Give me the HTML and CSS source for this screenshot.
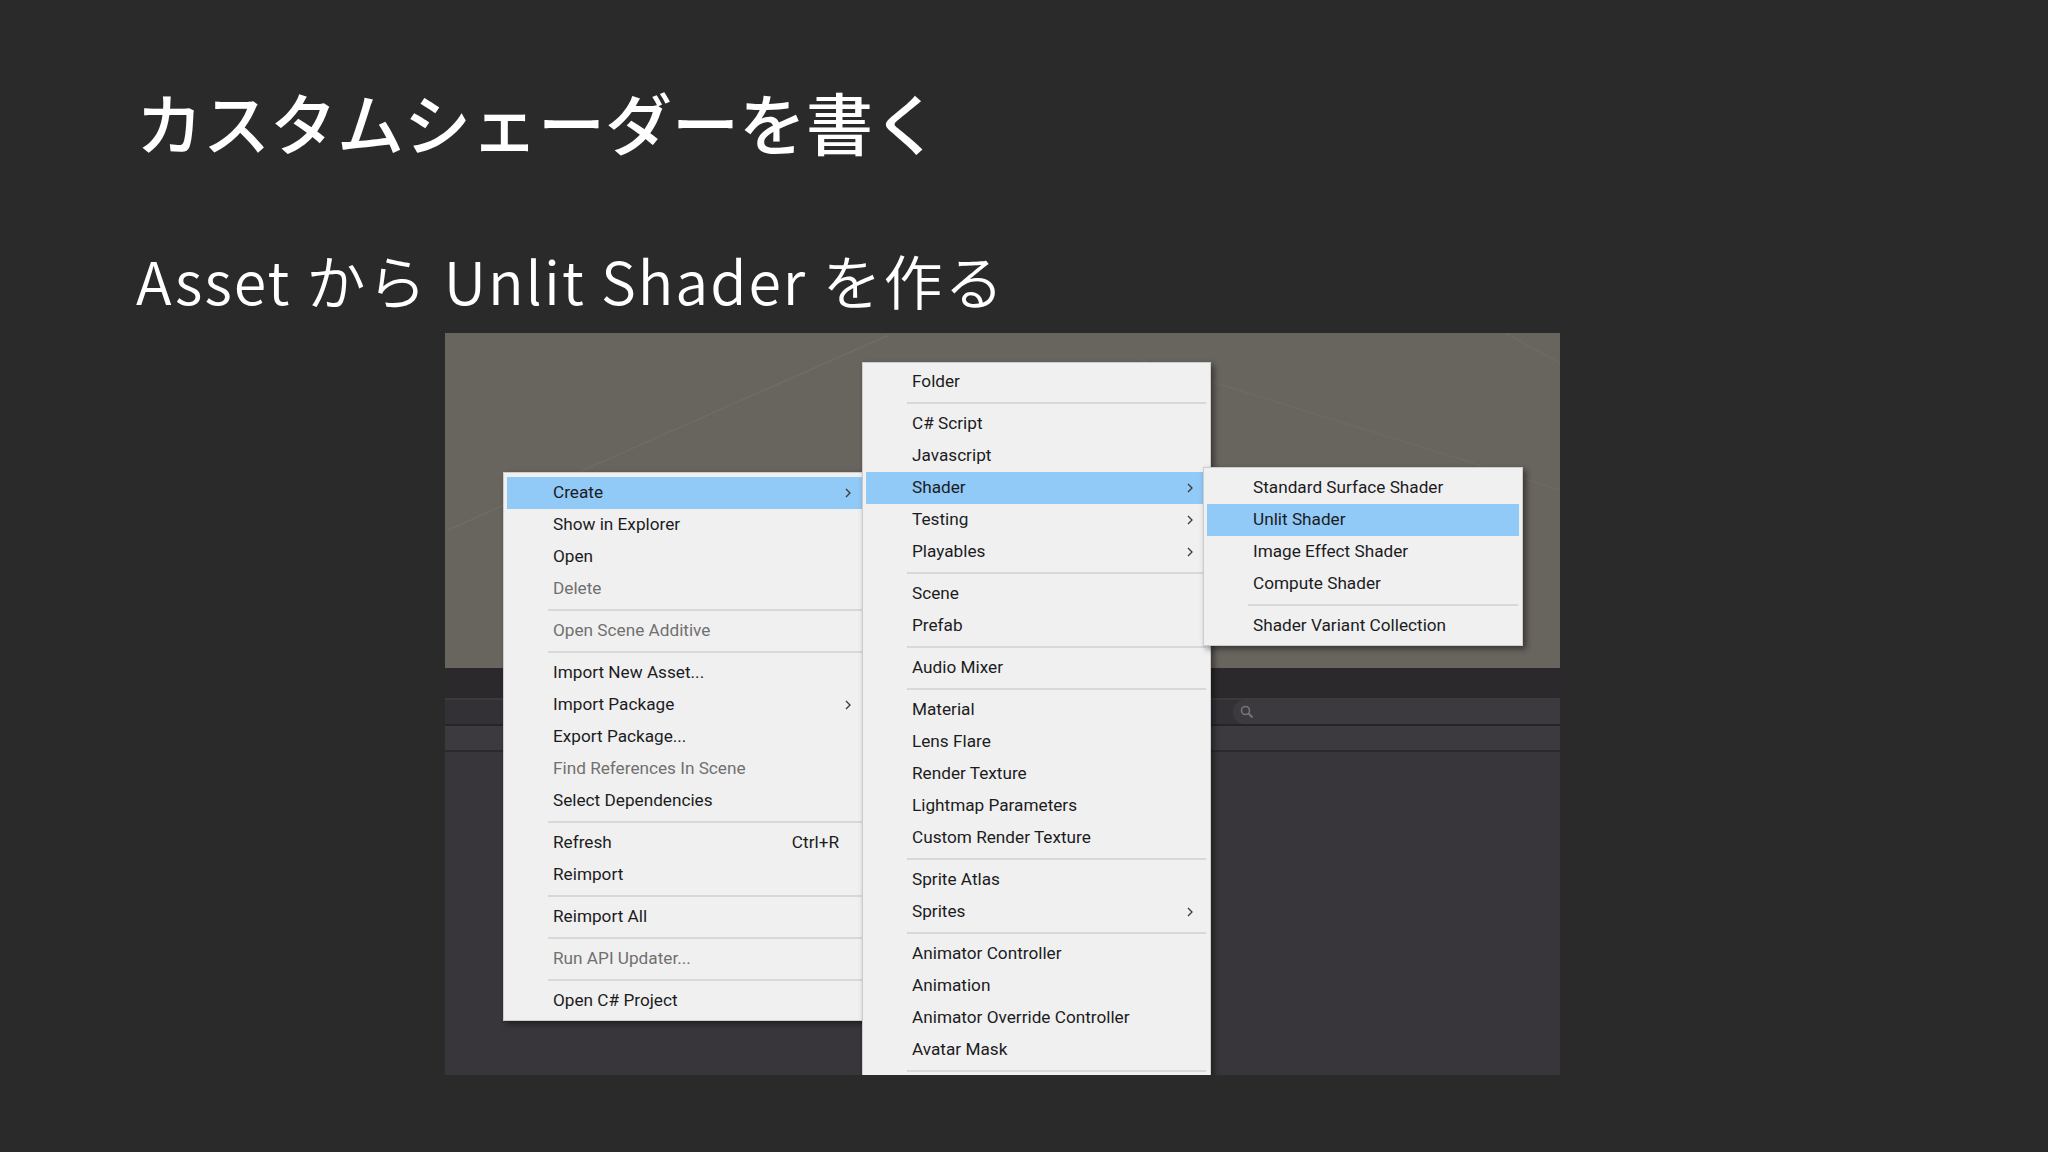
FILE: index.html
```html
<!DOCTYPE html>
<html lang="ja">
<head>
<meta charset="utf-8">
<title>カスタムシェーダーを書く</title>
<link rel="stylesheet" href="styles.css">
</head>
<body>
<div class="slide">
  <h1 class="title">カスタムシェーダーを書く</h1>
  <h2 class="subtitle">Asset から Unlit Shader を作る</h2>
  <div class="shot">
    <div class="scene">
      <svg class="grid" width="1115" height="335" viewBox="0 0 1115 335">
        <line x1="444" y1="2" x2="3" y2="197" stroke="rgba(255,255,255,0.05)" stroke-width="1.5"/>
        <line x1="690" y1="25" x2="1115" y2="157" stroke="rgba(255,255,255,0.035)" stroke-width="1.5"/>
        <line x1="1060" y1="0" x2="1115" y2="30" stroke="rgba(255,255,255,0.04)" stroke-width="1.5"/>
      </svg>
    </div>
    <div class="gap"></div>
    <div class="tb-line"></div>
    <div class="toolbar">
      <div class="search">
        <svg width="14" height="14" viewBox="0 0 14 14"><circle cx="5.5" cy="5.5" r="4" fill="none" stroke="#75737a" stroke-width="1.6"/><line x1="8.5" y1="8.5" x2="12.5" y2="12.5" stroke="#75737a" stroke-width="2"/></svg>
      </div>
    </div>
    <div class="dline"></div>
    <div class="row2"></div>
    <div class="dline2"></div>
    <div class="panel"></div>

    <div class="menu menu-left">
      <div class="item hl"><span>Create</span><svg class="arrow" width="6" height="10" viewBox="0 0 6 10"><path d="M1 1 L5 5 L1 9" fill="none" stroke="#3a3a3a" stroke-width="1.3"/></svg></div>
      <div class="item"><span>Show in Explorer</span></div>
      <div class="item"><span>Open</span></div>
      <div class="item dis"><span>Delete</span></div>
      <div class="sep"></div>
      <div class="item dis"><span>Open Scene Additive</span></div>
      <div class="sep"></div>
      <div class="item"><span>Import New Asset...</span></div>
      <div class="item"><span>Import Package</span><svg class="arrow" width="6" height="10" viewBox="0 0 6 10"><path d="M1 1 L5 5 L1 9" fill="none" stroke="#3a3a3a" stroke-width="1.3"/></svg></div>
      <div class="item"><span>Export Package...</span></div>
      <div class="item dis"><span>Find References In Scene</span></div>
      <div class="item"><span>Select Dependencies</span></div>
      <div class="sep"></div>
      <div class="item"><span>Refresh</span><span class="key">Ctrl+R</span></div>
      <div class="item"><span>Reimport</span></div>
      <div class="sep"></div>
      <div class="item"><span>Reimport All</span></div>
      <div class="sep"></div>
      <div class="item dis"><span>Run API Updater...</span></div>
      <div class="sep"></div>
      <div class="item"><span>Open C# Project</span></div>
    </div>

    <div class="menu menu-mid">
      <div class="item"><span>Folder</span></div>
      <div class="sep"></div>
      <div class="item"><span>C# Script</span></div>
      <div class="item"><span>Javascript</span></div>
      <div class="item hl"><span>Shader</span><svg class="arrow" width="6" height="10" viewBox="0 0 6 10"><path d="M1 1 L5 5 L1 9" fill="none" stroke="#3a3a3a" stroke-width="1.3"/></svg></div>
      <div class="item"><span>Testing</span><svg class="arrow" width="6" height="10" viewBox="0 0 6 10"><path d="M1 1 L5 5 L1 9" fill="none" stroke="#3a3a3a" stroke-width="1.3"/></svg></div>
      <div class="item"><span>Playables</span><svg class="arrow" width="6" height="10" viewBox="0 0 6 10"><path d="M1 1 L5 5 L1 9" fill="none" stroke="#3a3a3a" stroke-width="1.3"/></svg></div>
      <div class="sep"></div>
      <div class="item"><span>Scene</span></div>
      <div class="item"><span>Prefab</span></div>
      <div class="sep"></div>
      <div class="item"><span>Audio Mixer</span></div>
      <div class="sep"></div>
      <div class="item"><span>Material</span></div>
      <div class="item"><span>Lens Flare</span></div>
      <div class="item"><span>Render Texture</span></div>
      <div class="item"><span>Lightmap Parameters</span></div>
      <div class="item"><span>Custom Render Texture</span></div>
      <div class="sep"></div>
      <div class="item"><span>Sprite Atlas</span></div>
      <div class="item"><span>Sprites</span><svg class="arrow" width="6" height="10" viewBox="0 0 6 10"><path d="M1 1 L5 5 L1 9" fill="none" stroke="#3a3a3a" stroke-width="1.3"/></svg></div>
      <div class="sep"></div>
      <div class="item"><span>Animator Controller</span></div>
      <div class="item"><span>Animation</span></div>
      <div class="item"><span>Animator Override Controller</span></div>
      <div class="item"><span>Avatar Mask</span></div>
      <div class="sep"></div>
      <div class="spacer"></div>
    </div>

    <div class="menu menu-right">
      <div class="item"><span>Standard Surface Shader</span></div>
      <div class="item hl"><span>Unlit Shader</span></div>
      <div class="item"><span>Image Effect Shader</span></div>
      <div class="item"><span>Compute Shader</span></div>
      <div class="sep"></div>
      <div class="item"><span>Shader Variant Collection</span></div>
    </div>
  </div>
</div>
</body>
</html>
```

FILE: styles.css
```css
* { box-sizing: border-box; }
html, body {
  margin: 0;
  background: #2a2a2a;
}
body {
  width: 2048px;
  height: 1152px;
  overflow: hidden;
  font-family: "Noto Sans CJK JP", "Noto Sans", sans-serif;
}
.slide {
  padding: 87px 0 0 136px;
}
.title {
  margin: 0;
  font-size: 67px;
  line-height: 68px;
  font-weight: 500;
  color: #ffffff;
  white-space: nowrap;
}
.subtitle {
  margin: 96px 0 0;
  font-size: 59px;
  line-height: 57px;
  font-weight: 350;
  letter-spacing: 2px;
  color: #ffffff;
  white-space: nowrap;
}
.shot {
  margin: 25px 0 0 309px;
  width: 1115px;
  height: 742px;
  position: relative;
  overflow: hidden;
  background: #38363a;
  display: flex;
  flex-direction: column;
}
.scene {
  height: 335px;
  flex: none;
  background: #68645e;
  position: relative;
}
.grid {
  position: absolute;
  left: 0;
  top: 0;
}
.gap { height: 30px; flex: none; background: #2b292c; }
.tb-line { height: 2px; flex: none; background: #3c3a3d; }
.toolbar {
  height: 24px;
  flex: none;
  background: #333135;
  display: flex;
}
.search {
  margin-left: 788px;
  flex: 1;
  background: #3c3a3e;
  border-radius: 12px 0 0 12px;
  display: flex;
  align-items: center;
  padding-left: 7px;
}
.dline { height: 2px; flex: none; background: #262427; }
.row2 { height: 24px; flex: none; background: #3c3a3e; }
.dline2 { height: 2px; flex: none; background: #2b292c; }
.panel { flex: 1; background: #38363a; }

.menu {
  position: absolute;
  background: #f0f0f0;
  border: 1px solid #cccccc;
  box-shadow: 3px 3px 6px rgba(0, 0, 0, 0.45);
  padding: 3px;
  font-family: Roboto, "Noto Sans", sans-serif;
  font-size: 17.2px;
  color: #1c1c1e;
}
.menu-left { left: 58px; top: 139px; width: 366px; padding-top: 4px; }
.menu-mid { left: 417px; top: 29px; width: 349px; }
.menu-right { left: 758px; top: 134px; width: 320px; padding-top: 4px; }

.item {
  height: 32px;
  padding: 0 14px 2px 46px;
  display: flex;
  align-items: flex-start;
  line-height: 30px;
  white-space: nowrap;
}
.item.hl { background: #91c9f7; }
.item.dis { color: #707070; }
.arrow {
  margin-left: auto;
  align-self: center;
  margin-top: 2px;
}
.key {
  margin-left: auto;
  margin-right: 12px;
}
.sep {
  height: 2px;
  background: #d8d8d8;
  margin: 4px 1px 4px 41px;
}
.spacer { height: 32px; }
```
